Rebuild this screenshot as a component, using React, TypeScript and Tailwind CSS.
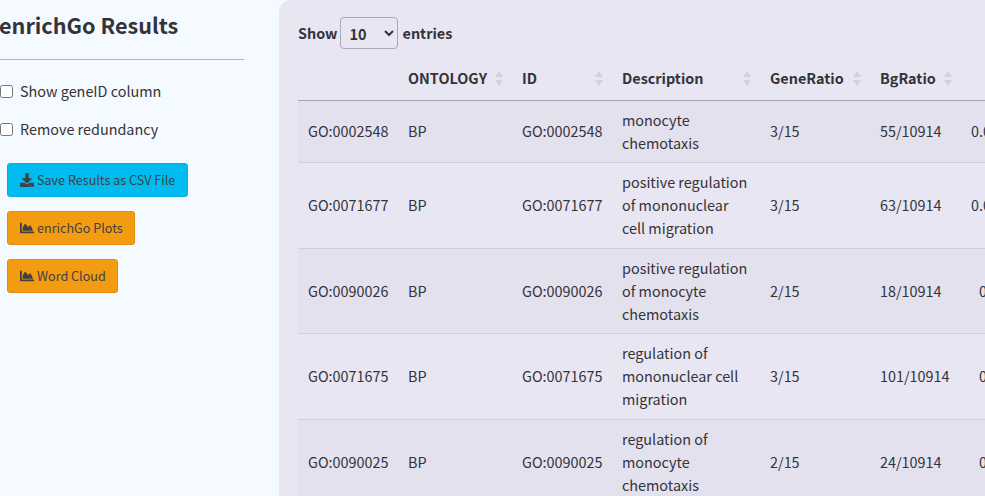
import { FaChartArea, FaDownload } from 'react-icons/fa';

const rows = [
  { go: 'GO:0002548', desc: ['monocyte', 'chemotaxis'], gene: '3/15', bg: '55/10914', p: '0.0', pad: 'pl-[11px]', h: 62 },
  { go: 'GO:0071677', desc: ['positive regulation', 'of mononuclear', 'cell migration'], gene: '3/15', bg: '63/10914', p: '0.0', pad: 'pl-[11px]', h: 86 },
  { go: 'GO:0090026', desc: ['positive regulation', 'of monocyte', 'chemotaxis'], gene: '2/15', bg: '18/10914', p: '0', pad: 'pl-[19px]', h: 85 },
  { go: 'GO:0071675', desc: ['regulation of', 'mononuclear cell', 'migration'], gene: '3/15', bg: '101/10914', p: '0', pad: 'pl-[19px]', h: 86 },
  { go: 'GO:0090025', desc: ['regulation of', 'monocyte', 'chemotaxis'], gene: '2/15', bg: '24/10914', p: '0', pad: 'pl-[19px]', h: 85 },
];

const cols = 'grid grid-cols-[100px_114px_100px_148px_110px_90px_1fr]';

function SortArrows() {
  return (
    <span className="flex flex-col gap-[3px]">
      <span className="w-0 h-0 border-x-[4px] border-x-transparent border-b-[6px] border-b-[#d3d1e0]" />
      <span className="w-0 h-0 border-x-[4px] border-x-transparent border-t-[6px] border-t-[#d3d1e0]" />
    </span>
  );
}

function Head({ label, arrowAt }: { label: string; arrowAt?: number }) {
  return (
    <div className="relative pl-[10px] pb-[6px] flex items-center h-full">
      {label}
      {arrowAt !== undefined && (
        <span className="absolute top-[9px]" style={{ left: arrowAt }}>
          <SortArrows />
        </span>
      )}
    </div>
  );
}

function ActionButton({ color, icon, label }: { color: string; icon: 'download' | 'chart'; label: string }) {
  return (
    <button className={`flex items-center gap-[3px] h-[34px] pl-[12px] rounded-[3px] border text-[12.6px] text-[#3f4045] w-fit ${color}`}>
      {icon === 'download' ? <FaDownload size={14} /> : <FaChartArea size={14} />}
      {label}
    </button>
  );
}

export default function App() {
  return (
    <div className="flex h-[496px] w-[985px] overflow-hidden bg-[#f4faff] text-[14.4px] text-[#333338] font-['Noto_Sans_CJK_SC','Noto_Sans',sans-serif]">
      <aside className="w-[279px] shrink-0 flex flex-col">
        <h2 className="mt-[10px] -ml-[1px] text-[21.6px] leading-[30px] font-semibold text-[#33333b]">enrichGo Results</h2>
        <div className="mt-[19px] w-[244px] border-t border-[#b4b6ba]" />
        <label className="mt-[21px] flex items-center gap-[7px] leading-[20px]">
          <input type="checkbox" className="w-[13px] h-[13px]" />
          Show geneID column
        </label>
        <label className="mt-[18px] flex items-center gap-[7px] leading-[20px]">
          <input type="checkbox" className="w-[13px] h-[13px]" />
          Remove redundancy
        </label>
        <div className="mt-[24px] ml-[7px] flex flex-col gap-[14px]">
          <ActionButton color="pr-[12px] bg-[#00bcee] border-[#00b2e4]" icon="download" label="Save Results as CSV File" />
          <ActionButton color="pr-[11px] bg-[#f39c12] border-[#e08e0b]" icon="chart" label="enrichGo Plots" />
          <ActionButton color="pr-[11px] bg-[#f39c12] border-[#e08e0b]" icon="chart" label="Word Cloud" />
        </div>
      </aside>
      <main className="flex-1 bg-[#e8e6f3] rounded-tl-[12px] pl-[19px] overflow-hidden">
        <div className="mt-[17px] flex items-center gap-[3px] h-[32px] font-semibold">
          Show
          <select className="w-[58px] h-[32px] -ml-[1px] mr-[2px] pl-[5px] rounded-[4px] border border-[#a9a8b3] bg-[#e8e6f3] font-semibold">
            <option>10</option>
          </select>
          entries
        </div>
        <div className={`${cols} mt-[13px] h-[39px] w-[720px] font-semibold border-b border-[#a4a3ae]`}>
          <Head label="" />
          <Head label="ONTOLOGY" arrowAt={97} />
          <Head label="ID" arrowAt={83} />
          <Head label="Description" arrowAt={131} />
          <Head label="GeneRatio" arrowAt={93} />
          <Head label="BgRatio" arrowAt={74} />
          <Head label="" />
        </div>
        {rows.map((r, i) => (
          <div
            key={r.go}
            className={`${cols} w-[720px] items-center leading-[23px] pb-[2px] border-b border-[#d0cfdc] ${i % 2 === 0 ? 'bg-[#e3e1ee]' : ''}`}
            style={{ height: r.h }}
          >
            <div className="pl-[10px]">{r.go}</div>
            <div className="pl-[10px]">BP</div>
            <div className="pl-[10px]">{r.go}</div>
            <div className="pl-[10px]">
              {r.desc.map(line => (
                <div key={line}>{line}</div>
              ))}
            </div>
            <div className="pl-[10px]">{r.gene}</div>
            <div className="pl-[10px]">{r.bg}</div>
            <div className={r.pad}>{r.p}</div>
          </div>
        ))}
      </main>
    </div>
  );
}
